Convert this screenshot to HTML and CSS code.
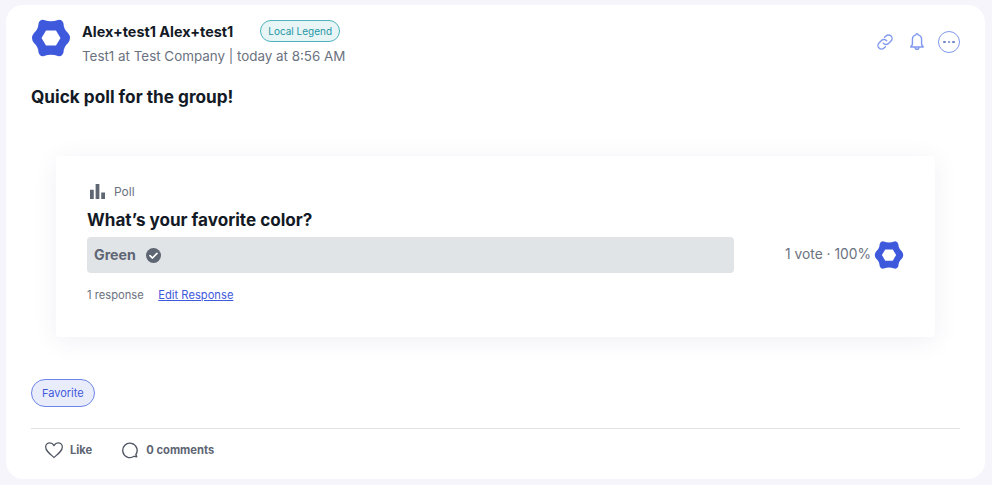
FILE: index.html
```html
<!DOCTYPE html>
<html lang="en">
<head>
<meta charset="utf-8">
<title>Poll post</title>
<link rel="stylesheet" href="styles.css">
</head>
<body>
<article class="post">
  <header class="post-head">
    <svg class="avatar" viewBox="0 0 40 40"><path class="hex" fill-rule="evenodd" d="M13 2Q20 4.500 27 2Q31 1 32.500 5.500Q32.500 11 37 15Q41 20 37 25Q32.500 29 32.500 34.500Q31 39 27 38Q20 35.500 13 38Q9 39 7.500 34.500Q7.500 29 3 25Q-1 20 3 15Q7.500 11 7.500 5.500Q9 1 13 2ZM10.500 20L15 12.500H25L29.500 20L25 27.500H15Z"/></svg>
    <div class="who">
      <div class="name-row">
        <span class="name">Alex+test1 Alex+test1</span>
        <span class="badge">Local Legend</span>
      </div>
      <div class="sub">Test1 at Test Company | today at 8:56 AM</div>
    </div>
    <div class="actions">
      <svg class="act" viewBox="0 0 24 24"><path d="M10 13.500a4.200 4.200 0 0 0 6.200.4l3-3a4.300 4.300 0 0 0-6.100-6.100l-1.600 1.600"/><path d="M14 10.500a4.200 4.200 0 0 0-6.200-.4l-3 3a4.300 4.300 0 0 0 6.100 6.100l1.600-1.600"/></svg>
      <svg class="act" viewBox="0 0 24 24"><path d="M12 2a1.300 1.300 0 0 1 1.300 1.400c2.700.6 4.200 2.800 4.200 5.600v6l2 3h-15l2-3V9c0-2.800 1.500-5 4.200-5.600A1.300 1.300 0 0 1 12 2z"/><path d="M9.800 18.500a2.200 2.200 0 0 0 4.400 0"/></svg>
      <span class="more"><i></i><i></i><i></i></span>
    </div>
  </header>
  <h1 class="title">Quick poll for the group!</h1>
  <section class="poll">
    <div class="poll-label">
      <svg class="poll-icon" viewBox="0 0 16 16"><path d="M0 6h4v10H0zM6 0h4v16H6zM12 9h4v7h-4z"/></svg>
      <span>Poll</span>
    </div>
    <h2 class="question">What’s your favorite color?</h2>
    <div class="option-row">
      <div class="bar">
        <span>Green</span>
        <svg class="check" viewBox="0 0 16 16"><circle cx="8" cy="8" r="8"/><path d="M4.300 8.200l2.600 2.500 4.800-5"/></svg>
      </div>
      <div class="result">
        <span class="result-text">1 vote · 100%</span>
        <svg class="mini" viewBox="0 0 40 40"><path class="hex" fill-rule="evenodd" d="M13 2Q20 4.500 27 2Q31 1 32.500 5.500Q32.500 11 37 15Q41 20 37 25Q32.500 29 32.500 34.500Q31 39 27 38Q20 35.500 13 38Q9 39 7.500 34.500Q7.500 29 3 25Q-1 20 3 15Q7.500 11 7.500 5.500Q9 1 13 2ZM10.500 20L15 12.500H25L29.500 20L25 27.500H15Z"/></svg>
      </div>
    </div>
    <div class="poll-meta">
      <span>1 response</span>
      <a href="#">Edit Response</a>
    </div>
  </section>
  <div class="tags"><span class="tag">Favorite</span></div>
  <footer class="foot">
    <span class="foot-item">
      <svg class="heart" viewBox="0 0 24 24"><path d="M12 21C6 16 2 12.800 2 8.500 2 5.500 4.300 3.500 7 3.500c2 0 3.800 1 5 3.200 1.200-2.200 3-3.200 5-3.200 2.700 0 5 2 5 5 0 4.300-4 7.500-10 12.500z"/></svg>
      Like
    </span>
    <span class="foot-item comments">
      <svg class="bubble" viewBox="0 0 20 20"><path d="M16.500 15A8 8 0 1 0 14.500 17L17.500 17.500Z"/></svg>
      0 comments
    </span>
  </footer>
</article>
</body>
</html>
```
FILE: styles.css
```css
* { box-sizing: border-box; }
html, body { height: 100%; }
body {
  margin: 0;
  padding: 5px 7px 6px 6px;
  background: #f5f5fb;
  font-family: Inter, "Liberation Sans", sans-serif;
  color: #131a26;
  overflow: hidden;
}
.post {
  height: 474px;
  background: #fff;
  border-radius: 17px;
  padding: 13px 25px 0;
}
.post-head { display: flex; align-items: flex-start; }
.avatar { width: 40px; height: 40px; flex: none; }
.hex { fill: #3f59dc; }
.who { margin-left: 11px; flex: 1; }
.name-row { display: flex; align-items: center; height: 26px; }
.name { font-size: 14.400px; font-weight: 700; width: 178px; }
.badge {
  height: 22px;
  line-height: 20px;
  padding: 0 7.300px;
  border: 1px solid #4fb3bd;
  border-radius: 11px;
  background: #e8f5f6;
  color: #1f97a6;
  font-size: 10px;
}
.sub { margin-top: 2px; font-size: 13.400px; color: #6b7280; line-height: 20px; }
.actions { display: flex; align-items: center; gap: 12px; margin-top: 13px; }
.act {
  width: 20px;
  height: 20px;
  fill: none;
  stroke: #8199ee;
  stroke-width: 1.700;
  stroke-linecap: round;
  stroke-linejoin: round;
}
.more {
  width: 22px;
  height: 22px;
  margin-left: -1px;
  border: 1px solid #8199ee;
  border-radius: 50%;
  display: flex;
  align-items: center;
  justify-content: center;
  gap: 2px;
}
.more i { width: 2.500px; height: 2.500px; border-radius: 50%; background: #6f83c8; }
.title {
  margin: 19px 0 0;
  font-size: 17.200px;
  line-height: 24px;
  font-weight: 700;
}
.poll {
  margin: 47px 25px 0;
  height: 181px;
  padding: 25px 31px 0;
  background: #fff;
  border-radius: 4px;
  box-shadow: 0 4px 24px rgba(60, 70, 140, .08);
}
.poll-label {
  display: flex;
  align-items: center;
  gap: 9px;
  height: 20px;
  padding-left: 3px;
  font-size: 12px;
  color: #6b7280;
}
.poll-icon { width: 15px; height: 15px; fill: #5e6573; }
.question {
  margin: 9px 0 0;
  font-size: 17.100px;
  line-height: 20px;
  font-weight: 700;
}
.option-row { display: flex; align-items: center; margin-top: 7px; }
.bar {
  width: 647px;
  height: 36px;
  background: #e1e4e7;
  border-radius: 4px;
  display: flex;
  align-items: center;
  gap: 10px;
  padding: 0 0 2px 7px;
  font-size: 14.200px;
  font-weight: 700;
  color: #5e6573;
}
.check { width: 15px; height: 15px; margin-top: 2px; }
.check circle { fill: #5e6573; }
.check path { fill: none; stroke: #fff; stroke-width: 1.800; stroke-linecap: round; stroke-linejoin: round; }
.result {
  margin-left: auto;
  display: flex;
  align-items: center;
  gap: 3px;
  font-size: 13.800px;
  color: #6b7280;
}
.result-text { padding-bottom: 2px; }
.mini { width: 30px; height: 30px; }
.poll-meta {
  display: flex;
  gap: 14.500px;
  margin-top: 14px;
  font-size: 11.200px;
  line-height: 16px;
  color: #6b7280;
}
.poll-meta a { color: #3f59dc; text-decoration: underline; }
.tags { margin-top: 42px; display: flex; }
.tag {
  height: 28px;
  line-height: 26px;
  padding: 0 10px;
  border: 1px solid #6d84e8;
  border-radius: 14px;
  background: #e9edfb;
  color: #3f59dc;
  font-size: 11px;
}
.foot {
  margin-top: 21px;
  border-top: 1px solid #e1e4e7;
  height: 42px;
  display: flex;
  align-items: center;
  gap: 29px;
  padding-left: 13px;
  font-size: 11.200px;
  font-weight: 700;
  color: #5e6573;
}
.foot-item { display: flex; align-items: center; gap: 6px; }
.comments { gap: 7px; }
.heart, .bubble { fill: none; stroke: #4f5562; stroke-width: 1.500; stroke-linejoin: round; }
.heart { width: 20px; height: 20px; }
.bubble { width: 18px; height: 18px; }
```
